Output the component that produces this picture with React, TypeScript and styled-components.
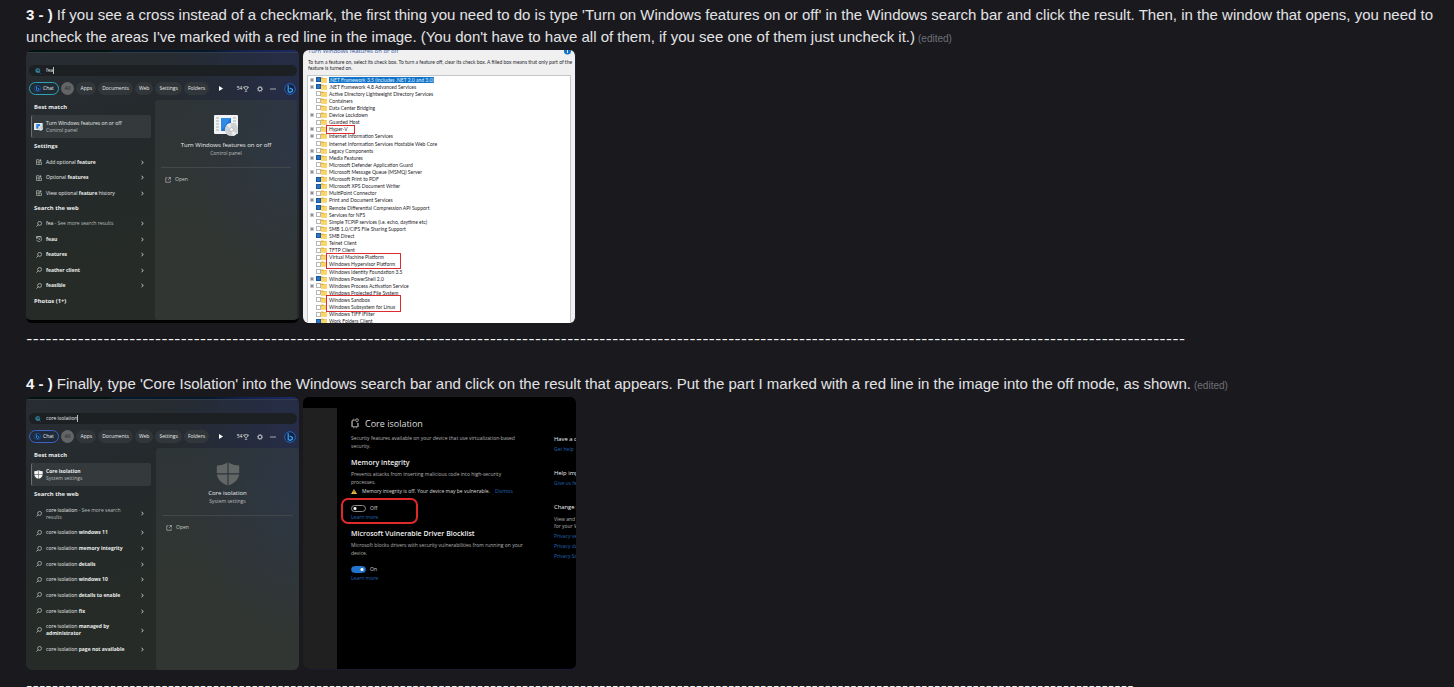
import React from 'react';
import styled, { createGlobalStyle, css } from 'styled-components';

const GlobalStyle = createGlobalStyle`
  *, *::after { box-sizing: border-box; }
  html { background: #1a1a1e; overflow: hidden; }
  body {
    margin: 0;
    background: #1a1a1e;
    color: #e3e3e6;
    font-family: 'Liberation Sans', sans-serif;
    overflow: hidden;
  }
  p, h2, h3, ul { margin: 0; padding: 0; font-weight: inherit; }
  button, input { font: inherit; color: inherit; margin: 0; }
  svg { display: block; flex: none; }
`;

/* ---------- chat log ---------- */

const Log = styled.main`
  height: 100vh;
  overflow: hidden;
  padding: 4px 0 0 26px;
`;

const Message = styled.article``;

const MessageText = styled.p`
  font-size: 15px;
  line-height: 22px;
  white-space: nowrap;
  b { font-weight: 700; color: #f4f4f6; }
`;

const Edited = styled.small`
  margin-left: 3px;
  font-size: 10px;
  line-height: 10px;
  color: #6f7078;
`;

const Attachments = styled.div`
  display: grid;
  grid-template-columns: 273px 273px;
  gap: 4px;
  margin-top: 2px;
`;

const Divider = styled.p<{ $gap: number }>`
  margin-bottom: ${p => p.$gap}px;
  padding-top: 5px;
  font-family: Inter, sans-serif;
  font-size: 14px;
  line-height: 22px;
  white-space: nowrap;
  color: #f4f4f6;
`;

const Shot = styled.section`
  position: relative;
  height: 273px;
  overflow: hidden;
  border-radius: 6px;
  font-size: 5px;
  line-height: 7px;
`;

/* ---------- start menu search ---------- */

const StartMenu = styled(Shot)<{ $footer: boolean }>`
  display: flex;
  flex-direction: column;
  padding-top: ${p => (p.$footer ? 15 : 16)}px;
  font-family: 'Open Sans', sans-serif;
  color: #e9ebea;
  background:
    linear-gradient(to bottom, transparent 2px, rgba(255, 255, 255, 0.07) 2px, rgba(255, 255, 255, 0.07) 3px, transparent 3px),
    linear-gradient(90deg, #01130f 0 30%, #03182a 32% 66%, #14204f 80%, #1d2a63) 0 0 / 100% 2px no-repeat,
    radial-gradient(ellipse 140px 180px at 100% 12%, rgba(38, 46, 92, 0.6), transparent),
    linear-gradient(165deg, #272d32 0%, #242a2b 35%, #262b27 70%);
  border-bottom: ${p => (p.$footer ? '3px solid #010302' : '0')};
`;

const SearchBar = styled.label`
  display: flex;
  align-items: center;
  gap: 5px;
  height: 11px;
  margin: 0 2px 0 3px;
  padding-left: 6px;
  border-radius: 6px;
  background: #1c2022;
`;

const SearchInput = styled.input`
  field-sizing: content;
  height: 7px;
  padding: 0;
  border: 0;
  border-right: 1px solid #b9bdbc;
  background: none;
  outline: none;
  line-height: 7px;
`;

const Filters = styled.nav`
  display: flex;
  align-items: center;
  gap: 2px;
  height: 13px;
  margin: 6px 3px 0 3px;
`;

const Pill = styled.button<{ $kind?: 'chat' | 'chatBlue' | 'all' }>`
  display: flex;
  align-items: center;
  justify-content: center;
  gap: 2px;
  height: 13px;
  padding: 0 4px;
  border: 0;
  border-radius: 7px;
  background: #31363a;
  line-height: 7px;
  font-weight: 500;
  ${p => p.$kind === 'chat' && css`border: 1px solid #2fa3b4; background: #1f2c36;`}
  ${p => p.$kind === 'chatBlue' && css`border: 1px solid #3f62c8; background: #1f2a3a;`}
  ${p => p.$kind === 'all' && css`background: #626466; color: #202325;`}
`;

const Tools = styled.div`
  display: flex;
  flex: 1;
  align-items: center;
  justify-content: space-between;
  padding-left: 8px;
`;

const Points = styled.span`
  display: flex;
  align-items: center;
  gap: 1px;
  margin-left: 6px;
`;

const MenuBody = styled.div`
  display: grid;
  grid-template-columns: 129px 1fr;
  flex: 1;
  min-height: 0;
  margin-top: 5px;
`;

const Results = styled.div`
  padding: 4px 4px 0 5px;
`;

const GroupTitle = styled.h3`
  padding-left: 3px;
  font-weight: 700;
  line-height: 7px;
`;

const BestMatch = styled.a`
  display: flex;
  align-items: center;
  gap: 3px;
  height: 23px;
  margin: 4px 0 1px;
  padding-left: 2px;
  border-left: 1px solid #6a7072;
  border-radius: 2px;
  background: #343a3c;
  color: inherit;
  text-decoration: none;
`;

const Muted = styled.span`
  color: #b9bdbc;
`;

const Stack = styled.span`
  display: flex;
  flex-direction: column;
`;

const ResultList = styled.div`
  display: flex;
  flex-direction: column;
  height: 170px;
`;

const ResultSlot = styled.div<{ $tall?: boolean }>`
  display: flex;
  align-items: center;
  flex: ${p => (p.$tall ? 10 : 7)} 0 0;
  min-height: 0;
`;

const ResultLink = styled.a`
  display: flex;
  flex: 1;
  align-items: center;
  gap: 4px;
  padding: 0 7px 0 5px;
  color: inherit;
  text-decoration: none;
  > span { flex: 1; white-space: nowrap; }
  b { font-weight: 700; }
`;

const Preview = styled.div<{ $inset: boolean }>`
  display: flex;
  flex-direction: column;
  align-items: center;
  margin-right: ${p => (p.$inset ? 2 : 0)}px;
  margin-left: ${p => (p.$inset ? 0 : 1)}px;
  padding: 12px 6px 0;
  border-radius: 3px;
  background:
    radial-gradient(ellipse 110px 150px at 100% 20%, rgba(44, 55, 80, 0.6), transparent),
    linear-gradient(#2e3537, #313632 60%);
`;

const PreviewIcon = styled.div`
  display: grid;
  place-items: center;
  height: 28px;
`;

const PreviewTitle = styled.h3`
  font-size: 6px;
  line-height: 10px;
`;

const OpenRow = styled.div`
  align-self: stretch;
  margin-top: 10px;
  padding: 8px 4px;
  border-top: 1px solid #41474a;
`;

const OpenButton = styled.button`
  display: flex;
  align-items: center;
  gap: 4px;
  padding: 0;
  border: 0;
  background: none;
  line-height: 7px;
  color: #c4c8c6;
`;

const BingIcon = ({ size }: { size: number }) => (
  <svg width={size} height={size} viewBox="0 0 12 12" fill="none">
    <circle cx="6" cy="6" r="5.3" stroke="#2563c9" strokeWidth="1" fill="#13233c" />
    <path d="M4.2 2.2v6.2l1.8 1.1 2.4-1.4V6.3L5.6 5" stroke="#3aa0f0" strokeWidth="1.3" strokeLinejoin="round" />
  </svg>
);

const BarIcon = () => (
  <svg width="6" height="6" viewBox="0 0 12 12" fill="none">
    <circle cx="5.5" cy="5" r="4" fill="#153a52" stroke="#3b9fc4" strokeWidth="1.4" />
    <path d="M4 3v4l2 1 1-1.5" stroke="#55c7a4" strokeWidth="1.2" />
    <path d="M8.4 8.4 11 11.2" stroke="#3d82e0" strokeWidth="1.5" />
  </svg>
);

const LensIcon = () => (
  <svg width="6" height="6" viewBox="0 0 12 12" fill="none" stroke="#d5d9d7" strokeWidth="1.3">
    <circle cx="7.2" cy="4.8" r="3.9" />
    <path d="M4.4 7.6 .8 11.2" />
  </svg>
);

const HistoryIcon = () => (
  <svg width="6" height="6" viewBox="0 0 12 12" fill="none" stroke="#d5d9d7" strokeWidth="1.2">
    <path d="M1 1v3.4h3.4M1.4 4.2A5 5 0 1 1 1.2 7.5M6 3.4v3l2.4 1.2" />
    <path d="M1 1h9a1.4 1.4 0 0 1 1 1" />
  </svg>
);

const GridIcon = () => (
  <svg width="6" height="6" viewBox="0 0 12 12" fill="none" stroke="#d5d9d7" strokeWidth="1.1">
    <path d="M1 1.4h5V11H1zM1 6.2h10V11H6M9 .5v4.4M6.8 2.7h4.4" />
  </svg>
);

const Chevron = () => (
  <svg width="3" height="5" viewBox="0 0 6 10" fill="none" stroke="#e2e5e4" strokeWidth="1.7">
    <path d="m1 2 3.5 3L1 8" />
  </svg>
);

const FeatureIcon = ({ width }: { width: number }) => (
  <svg width={width} height={Math.round(width * 0.88)} viewBox="0 0 25 22">
    <rect x="0" y="0" width="24" height="19" rx="1" fill="#f1f3f4" />
    <path d="M2 3h3M2 6h3M2 9h3M2 12h3M2 15h3M19 3h3M19 6h3M19 9h3" stroke="#a9b0b5" strokeWidth="1" />
    <rect x="7" y="3" width="10" height="13" fill="#1f74d0" />
    <path d="M7 3h10L7 16z" fill="#2f8ae6" />
    <circle cx="17.5" cy="14.5" r="6.6" fill="#cfd2d3" />
    <path d="M17.5 14.5 12.6 10a6.6 6.6 0 0 1 4-2z" fill="#eceeee" />
    <path d="m17.5 14.5 5 4.4a6.6 6.6 0 0 1-4 2.1z" fill="#eceeee" />
    <circle cx="17.5" cy="14.5" r="1.9" fill="#f6f6f6" stroke="#9fa4a6" strokeWidth=".6" />
  </svg>
);

const ShieldIcon = ({ size, color }: { size: number; color: string }) => (
  <svg width={size} height={size} viewBox="0 0 24 24">
    <path
      fill={color}
      d="M11.4.6v10.7H.8V3.6C5 3.6 8.5 2.6 11.4.6zM12.6.6c2.9 2 6.4 3 10.6 3v7.7H12.6zM.9 12.500h10.500v11C5.500 21.300 1.500 17.400.9 12.500zM12.600 12.500h10.500c-.6 4.900-4.600 8.800-10.500 11z"
    />
  </svg>
);

const OpenIcon = () => (
  <svg width="6" height="6" viewBox="0 0 12 12" fill="none" stroke="#cfd3d1" strokeWidth="1.1">
    <path d="M5 1.5H1.5v9h9V7M7 1h4v4M11 1 6 6" />
  </svg>
);

type Row = { icon?: 'lens' | 'grid' | 'history'; tall?: boolean; heading?: string; text?: React.ReactNode };

const icons = { lens: <LensIcon />, grid: <GridIcon />, history: <HistoryIcon /> };

const featureRows: Row[] = [
  { heading: 'Settings' },
  { icon: 'grid', text: <>Add optional <b>feature</b></> },
  { icon: 'grid', text: <>Optional <b>features</b></> },
  { icon: 'grid', text: <>View optional <b>feature</b> history</> },
  { heading: 'Search the web' },
  { icon: 'lens', text: <>fea <Muted>- See more search results</Muted></> },
  { icon: 'history', text: <b>feau</b> },
  { icon: 'lens', text: <b>features</b> },
  { icon: 'lens', text: <b>feather client</b> },
  { icon: 'lens', text: <b>feasible</b> },
  { heading: 'Photos (1+)' },
];

const isolationRows: Row[] = [
  { heading: 'Search the web' },
  { icon: 'lens', tall: true, text: <>core isolation <Muted>- See more search<br />results</Muted></> },
  { icon: 'lens', text: <>core isolation <b>windows 11</b></> },
  { icon: 'lens', text: <>core isolation <b>memory integrity</b></> },
  { icon: 'lens', text: <>core isolation <b>details</b></> },
  { icon: 'lens', text: <>core isolation <b>windows 10</b></> },
  { icon: 'lens', text: <>core isolation <b>details to enable</b></> },
  { icon: 'lens', text: <>core isolation <b>fix</b></> },
  { icon: 'lens', tall: true, text: <>core isolation <b>managed by<br />administrator</b></> },
  { icon: 'lens', text: <>core isolation <b>page not available</b></> },
];

type MenuProps = {
  query: string;
  inset: boolean;
  title: string;
  subtitle: string;
  boldTitle?: boolean;
  smallIcon: React.ReactNode;
  largeIcon: React.ReactNode;
  rows: Row[];
};

const SearchShot = ({ query, inset, title, subtitle, boldTitle, smallIcon, largeIcon, rows }: MenuProps) => (
  <StartMenu $footer={inset}>
    <SearchBar>
      <BarIcon />
      <SearchInput aria-label="Search" defaultValue={query} />
    </SearchBar>
    <Filters>
      <Pill $kind={inset ? 'chat' : 'chatBlue'}><BingIcon size={7} />Chat</Pill>
      <Pill $kind="all">All</Pill>
      <Pill>Apps</Pill>
      <Pill>Documents</Pill>
      <Pill>Web</Pill>
      <Pill>Settings</Pill>
      <Pill>Folders</Pill>
      <Tools>
        <svg width="4" height="5" viewBox="0 0 4 5"><path d="M0 0 4 2.5 0 5z" fill="#fff" /></svg>
        <Points>
          54
          <svg width="6" height="6" viewBox="0 0 12 12" fill="none" stroke="#d5d9d7" strokeWidth="1.2">
            <path d="M3.5 1h5v4a2.5 2.5 0 0 1-5 0zM3.5 2H1v1.5L3.5 5M8.5 2H11v1.5L8.5 5M6 7.5V10M3.5 11h5" />
          </svg>
        </Points>
        <svg width="6" height="6" viewBox="0 0 12 12" fill="none" stroke="#d5d9d7">
          <circle cx="6" cy="6" r="3.8" strokeWidth="1.8" />
          <circle cx="6" cy="6" r="5.2" strokeWidth="1.2" strokeDasharray="2 2.08" />
        </svg>
        <svg width="6" height="2" viewBox="0 0 6 2" fill="#d5d9d7">
          <circle cx="1" cy="1" r=".7" /><circle cx="3" cy="1" r=".7" /><circle cx="5" cy="1" r=".7" />
        </svg>
        <BingIcon size={12} />
      </Tools>
    </Filters>
    <MenuBody>
      <Results>
        <GroupTitle>Best match</GroupTitle>
        <BestMatch href="#best">
          {smallIcon}
          <Stack>
            {boldTitle ? <b>{title}</b> : <span>{title}</span>}
            <Muted>{subtitle}</Muted>
          </Stack>
        </BestMatch>
        <ResultList>
          {rows.map((row, i) => (
            <ResultSlot key={i} $tall={row.tall}>
              {row.heading ? (
                <GroupTitle>{row.heading}</GroupTitle>
              ) : (
                <ResultLink href="#result">
                  {icons[row.icon ?? 'lens']}
                  <span>{row.text}</span>
                  <Chevron />
                </ResultLink>
              )}
            </ResultSlot>
          ))}
        </ResultList>
      </Results>
      <Preview $inset={inset}>
        <PreviewIcon>{largeIcon}</PreviewIcon>
        <PreviewTitle>{title}</PreviewTitle>
        <Muted>{subtitle}</Muted>
        <OpenRow>
          <OpenButton><OpenIcon />Open</OpenButton>
        </OpenRow>
      </Preview>
    </MenuBody>
  </StartMenu>
);

/* ---------- windows features dialog ---------- */

const Dialog = styled(Shot)`
  padding: 0 4px 0 4px;
  background: #f0f0f1;
  border-right: 1px solid #1b2130;
  font-family: Lato, sans-serif;
  line-height: 6px;
  color: #26262a;
`;

const DialogHead = styled.header`
  display: flex;
  align-items: flex-start;
  justify-content: space-between;
  height: 9px;
  padding-left: 1px;
`;

const DialogTitle = styled.h2`
  margin-top: -3px;
  font-size: 6px;
  line-height: 9px;
  font-family: 'Open Sans', sans-serif;
  color: #31559f;
`;

const DialogNote = styled.p`
  height: 16px;
  padding-left: 1px;
  white-space: nowrap;
`;

const Tree = styled.div`
  display: flex;
  flex-direction: column;
  height: 251px;
  padding-left: 2px;
  border: 1px solid #c4c6ca;
  background: #fff;
`;

const Marked = styled.div<{ $rows: number; $width: number }>`
  position: relative;
  display: flex;
  flex-direction: column;
  flex: ${p => p.$rows} 0 0;
  &::after {
    content: '';
    position: absolute;
    inset: -1px auto -1px 16px;
    width: ${p => p.$width}px;
    border: 1px solid #dc2b33;
  }
`;

const Feature = styled.label`
  display: flex;
  align-items: center;
  flex: 1 0 0;
  min-height: 0;
`;

const Expander = styled.i<{ $shown?: boolean }>`
  width: 4px;
  height: 4px;
  margin-right: 2px;
  border: 1px solid #c8cacd;
  background: #8b8d91;
  visibility: ${p => (p.$shown ? 'visible' : 'hidden')};
`;

const Tick = styled.input`
  appearance: none;
  width: 5px;
  height: 5px;
  border: 1px solid #b4b6ba;
  background: #fff;
  &:checked { border-color: #1459a8; background: #2f74c0; }
`;

const FeatureName = styled.span<{ $selected?: boolean }>`
  margin-left: 2px;
  white-space: nowrap;
  ${p => p.$selected && css`background: #1173c9; color: #dcecfb;`}
`;

const Folder = () => (
  <svg width="6" height="6" viewBox="0 0 12 12">
    <path d="M0 1h4.5l1.5 1.5h6V11H0z" fill="#e9b53a" />
    <path d="M0 4h12v7H0z" fill="#fbd667" />
  </svg>
);

type Item = { name: string; plus?: boolean; on?: boolean; selected?: boolean };
type Block = { mark?: number; items: Item[] };

const tree: Block[] = [
  {
    items: [
      { name: '.NET Framework 3.5 (includes .NET 2.0 and 3.0)', plus: true, on: true, selected: true },
      { name: '.NET Framework 4.8 Advanced Services', plus: true, on: true },
      { name: 'Active Directory Lightweight Directory Services' },
      { name: 'Containers' },
      { name: 'Data Center Bridging' },
      { name: 'Device Lockdown', plus: true },
      { name: 'Guarded Host' },
    ],
  },
  { mark: 29, items: [{ name: 'Hyper-V', plus: true }] },
  {
    items: [
      { name: 'Internet Information Services', plus: true },
      { name: 'Internet Information Services Hostable Web Core' },
      { name: 'Legacy Components', plus: true },
      { name: 'Media Features', plus: true, on: true },
      { name: 'Microsoft Defender Application Guard' },
      { name: 'Microsoft Message Queue (MSMQ) Server', plus: true },
      { name: 'Microsoft Print to PDF', on: true },
      { name: 'Microsoft XPS Document Writer', on: true },
      { name: 'MultiPoint Connector', plus: true },
      { name: 'Print and Document Services', plus: true, on: true },
      { name: 'Remote Differential Compression API Support', on: true },
      { name: 'Services for NFS', plus: true },
      { name: 'Simple TCPIP services (i.e. echo, daytime etc)' },
      { name: 'SMB 1.0/CIFS File Sharing Support', plus: true },
      { name: 'SMB Direct', on: true },
      { name: 'Telnet Client' },
      { name: 'TFTP Client' },
    ],
  },
  { mark: 75, items: [{ name: 'Virtual Machine Platform' }, { name: 'Windows Hypervisor Platform' }] },
  {
    items: [
      { name: 'Windows Identity Foundation 3.5' },
      { name: 'Windows PowerShell 2.0', plus: true, on: true },
      { name: 'Windows Process Activation Service', plus: true },
      { name: 'Windows Projected File System' },
    ],
  },
  { mark: 75, items: [{ name: 'Windows Sandbox' }, { name: 'Windows Subsystem for Linux' }] },
  { items: [{ name: 'Windows TIFF iFilter' }, { name: 'Work Folders Client', on: true }] },
];

const FeatureRow = ({ item }: { item: Item }) => (
  <Feature>
    <Expander $shown={item.plus} />
    <Tick type="checkbox" defaultChecked={item.on} />
    <Folder />
    <FeatureName $selected={item.selected}>{item.name}</FeatureName>
  </Feature>
);

const FeaturesShot = () => (
  <Dialog>
    <DialogHead>
      <DialogTitle>Turn Windows features on or off</DialogTitle>
      <svg width="7" height="5" viewBox="0 0 7 5">
        <circle cx="3.5" cy="1" r="3.5" fill="#1473c8" />
        <path d="M3 0h1v3H3z" fill="#d8eafb" />
      </svg>
    </DialogHead>
    <DialogNote>
      To turn a feature on, select its check box. To turn a feature off, clear its check box. A filled box means that only part of the<br />
      feature is turned on.
    </DialogNote>
    <Tree>
      {tree.map((block, i) =>
        block.mark ? (
          <Marked key={i} $rows={block.items.length} $width={block.mark}>
            {block.items.map(item => <FeatureRow key={item.name} item={item} />)}
          </Marked>
        ) : (
          <React.Fragment key={i}>
            {block.items.map(item => <FeatureRow key={item.name} item={item} />)}
          </React.Fragment>
        ),
      )}
    </Tree>
  </Dialog>
);

/* ---------- core isolation page ---------- */

const Security = styled(Shot)`
  display: grid;
  grid-template-columns: 34px 203px 1fr;
  padding-top: 11px;
  background: #000;
  font-family: 'Open Sans', sans-serif;
  color: #b4b4b4;
  border-bottom: 1px solid #1b1a35;
`;

const Rail = styled.div`
  background: #202020;
`;

const Main = styled.div`
  padding: 9px 0 0 14px;
  white-space: nowrap;
`;

const PageTitle = styled.h2`
  display: flex;
  align-items: center;
  gap: 6px;
  margin-bottom: 4px;
  font-size: 9px;
  line-height: 13px;
  color: #dedede;
`;

const Copy = styled.p`
  line-height: 8px;
`;

const Heading = styled.h3`
  margin: 8px 0 3px;
  font-size: 7px;
  line-height: 9px;
  font-weight: 600;
  color: #f2f2f2;
`;

const Warning = styled.p`
  display: flex;
  align-items: center;
  gap: 5px;
  margin-top: 2px;
  color: #dcdcdc;
`;

const Link = styled.a`
  display: block;
  color: #2465b4;
  text-decoration: none;
`;

const Control = styled.div<{ $marked?: boolean }>`
  position: relative;
  margin-top: ${p => (p.$marked ? 9 : 8)}px;
  ${p => p.$marked && css`
    &::after {
      content: '';
      position: absolute;
      inset: -6px auto -3px -10px;
      width: 77px;
      border: 2px solid #e0292b;
      border-radius: 7px;
      pointer-events: none;
    }
  `}
`;

const ToggleLabel = styled.label`
  display: flex;
  align-items: center;
  gap: 4px;
  height: 8px;
  margin-bottom: 2px;
  color: #dcdcdc;
`;

const Toggle = styled.input`
  appearance: none;
  width: 15px;
  height: 7px;
  border: 1px solid #8a8a8a;
  border-radius: 4px;
  background: radial-gradient(circle at 3px 50%, #fff 1px, transparent 2px);
  &:checked {
    border-color: #2374cf;
    background: radial-gradient(circle at 10px 50%, #fff 1px, #2374cf 2px);
  }
`;

const Aside = styled.aside`
  display: flex;
  flex-direction: column;
  gap: 17px;
  padding: 28px 0 0 14px;
  overflow: hidden;
  white-space: nowrap;
`;

const AsideGroup = styled.div`
  display: flex;
  flex-direction: column;
  gap: 3px;
`;

const AsideTitle = styled.h3`
  font-weight: 500;
  color: #f0f0f0;
`;

const AsideCopy = styled.p`
  padding-top: 2px;
`;

const ChipIcon = () => (
  <svg width="8" height="11" viewBox="0 0 16 22" fill="none" stroke="#cfcfcf" strokeWidth="1.6">
    <path d="M2.5 4.500v13h11V10M2.500 4.500h5" />
    <path d="M0 8h2M0 12h2M0 16h2M14 12h2M14 16h2M5.500 20.500v-2M10.500 20.500v-2M5.500 1.500v2" />
    <path d="M12 1.500 9.500 2.500v2.700c0 1.400 1.200 2.200 2.500 2.800 1.300-.6 2.500-1.400 2.500-2.800V2.500z" />
  </svg>
);

const IsolationShot = () => (
  <Security>
    <Rail />
    <Main>
      <PageTitle><ChipIcon />Core isolation</PageTitle>
      <Copy>Security features available on your device that use virtualization-based<br />security.</Copy>
      <Heading>Memory integrity</Heading>
      <Copy>Prevents attacks from inserting malicious code into high-security<br />processes.</Copy>
      <Warning>
        <svg width="6" height="5" viewBox="0 0 12 10">
          <path d="M6 0 12 10H0z" fill="#f0bd3e" />
          <path d="M5.4 3h1.2v3.5H5.4zM5.4 7.4h1.2v1.2H5.4z" fill="#000" />
        </svg>
        Memory integrity is off. Your device may be vulnerable.
        <Link href="#dismiss">Dismiss</Link>
      </Warning>
      <Control $marked>
        <ToggleLabel><Toggle type="checkbox" />Off</ToggleLabel>
        <Link href="#memory">Learn more</Link>
      </Control>
      <Heading>Microsoft Vulnerable Driver Blocklist</Heading>
      <Copy>Microsoft blocks drivers with security vulnerabilities from running on your<br />device.</Copy>
      <Control>
        <ToggleLabel><Toggle type="checkbox" defaultChecked />On</ToggleLabel>
        <Link href="#blocklist">Learn more</Link>
      </Control>
    </Main>
    <Aside>
      <AsideGroup>
        <AsideTitle>Have a question?</AsideTitle>
        <Link href="#help">Get help</Link>
      </AsideGroup>
      <AsideGroup>
        <AsideTitle>Help improve Windows</AsideTitle>
        <Link href="#feedback">Give us feedback</Link>
      </AsideGroup>
      <AsideGroup>
        <AsideTitle>Change your privacy</AsideTitle>
        <AsideCopy>View and change<br />for your Windows</AsideCopy>
        <Link href="#settings">Privacy settings</Link>
        <Link href="#dashboard">Privacy dashboard</Link>
        <Link href="#statement">Privacy Statement</Link>
      </AsideGroup>
    </Aside>
  </Security>
);

export default function App() {
  return (
    <>
      <GlobalStyle />
      <Log>
        <Message>
          <MessageText>
            <b>3 - )</b> If you see a cross instead of a checkmark, the first thing you need to do is type 'Turn on Windows features on or off' in the Windows search bar and click the result. Then, in the window that opens, you need to<br />
            uncheck the areas I've marked with a red line in the image. (You don't have to have all of them, if you see one of them just uncheck it.)<Edited>(edited)</Edited>
          </MessageText>
          <Attachments>
            <SearchShot
              query="fea"
              inset
              title="Turn Windows features on or off"
              subtitle="Control panel"
              smallIcon={<FeatureIcon width={9} />}
              largeIcon={<FeatureIcon width={25} />}
              rows={featureRows}
            />
            <FeaturesShot />
          </Attachments>
        </Message>
        <Divider $gap={23}>{'-'.repeat(180)}</Divider>
        <Message>
          <MessageText>
            <b>4 - )</b> Finally, type 'Core Isolation' into the Windows search bar and click on the result that appears. Put the part I marked with a red line in the image into the off mode, as shown.<Edited>(edited)</Edited>
          </MessageText>
          <Attachments>
            <SearchShot
              query="core isolation"
              inset={false}
              boldTitle
              title="Core isolation"
              subtitle="System settings"
              smallIcon={<ShieldIcon size={9} color="#f5f5f5" />}
              largeIcon={<ShieldIcon size={24} color="#626665" />}
              rows={isolationRows}
            />
            <IsolationShot />
          </Attachments>
        </Message>
        <Divider $gap={0}>{'-'.repeat(172)}</Divider>
      </Log>
    </>
  );
}
